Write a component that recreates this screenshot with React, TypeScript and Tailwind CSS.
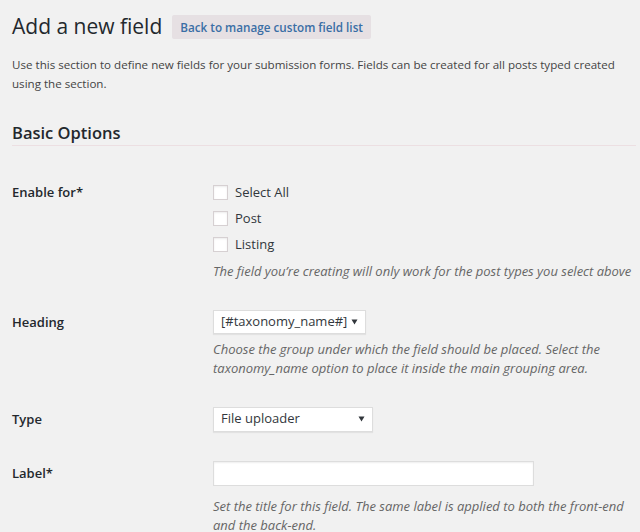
import React from "react";

const Caret = () => (
  <svg width="7" height="6" viewBox="0 0 7 6" className="shrink-0">
    <path d="M0.5 0.5 L6.5 0.5 L3.5 5.5 Z" fill="#32373c" />
  </svg>
);

const Checkbox = ({ label }: { label: string }) => (
  <label className="flex items-center h-[26px]">
    <span className="w-[15px] h-[15px] bg-white border border-[#d6d0d2] shadow-[inset_0_1px_2px_rgba(0,0,0,0.08)] mr-[7px]" />
    <span className="text-[13px] text-[#32373c] leading-[26px]">{label}</span>
  </label>
);

export default function App() {
  return (
    <div
      className="w-[640px] h-[532px] bg-[#f1f1f1] overflow-hidden text-[#23282d]"
      style={{ fontFamily: '"Open Sans", sans-serif' }}
    >
      <div className="pl-3 pr-1">
        <div className="flex items-center pt-[12px]">
          <h1 className="text-[21px] leading-[29px] font-normal text-[#23282d]">Add a new field</h1>
          <span className="ml-[10px] mt-[1px] bg-[#e6e0e3] text-[#3a6ea5] text-[11.7px] font-semibold px-[8px] h-[24px] leading-[24px] rounded-[2px]">
            Back to manage custom field list
          </span>
        </div>
        <p className="mt-[14px] text-[11.6px] leading-[19px] text-[#444]">
          Use this section to define new fields for your submission forms. Fields can be created for all posts typed created using the section.
        </p>
        <h2 className="mt-[29px] text-[16.5px] font-semibold leading-[22px] text-[#23282d] pb-[1px] border-b border-[#ecdfe2]">
          Basic Options
        </h2>

        <div className="grid grid-cols-[201px_1fr] mt-[33px]">
          <div className="text-[13px] font-semibold leading-[26px] text-[#23282d]">Enable for*</div>
          <div>
            <Checkbox label="Select All" />
            <Checkbox label="Post" />
            <Checkbox label="Listing" />
            <p className="mt-[5px] text-[13px] italic text-[#666] leading-[19.5px] whitespace-nowrap">
              The field you’re creating will only work for the post types you select above
            </p>
          </div>

          <div className="text-[13px] font-semibold leading-[24px] text-[#23282d] mt-[28px]">Heading</div>
          <div className="mt-[28px]">
            <div className="w-[153px] h-[24px] bg-white border border-[#ddd] shadow-[0_1px_1px_rgba(0,0,0,0.06)] flex items-center justify-between pl-[7px] pr-[7px] text-[13px] text-[#32373c]">
              <span>[#taxonomy_name#]</span>
              <Caret />
            </div>
            <p className="mt-[6px] text-[13px] italic text-[#666] leading-[19.5px] pr-[24px]">
              Choose the group under which the field should be placed. Select the taxonomy_name option to place it inside the main grouping area.
            </p>
          </div>

          <div className="text-[13px] font-semibold leading-[25px] text-[#23282d] mt-[28px]">Type</div>
          <div className="mt-[28px]">
            <div className="w-[160px] h-[25px] bg-white border border-[#ddd] shadow-[0_1px_1px_rgba(0,0,0,0.06)] flex items-center justify-between pl-[7px] pr-[7px] text-[13px] text-[#32373c]">
              <span>File uploader</span>
              <Caret />
            </div>
          </div>

          <div className="text-[13px] font-semibold leading-[25px] text-[#23282d] mt-[29px]">Label*</div>
          <div className="mt-[29px]">
            <div className="w-[321px] h-[25px] bg-white border border-[#ddd] shadow-[inset_0_1px_2px_rgba(0,0,0,0.07)]" />
            <p className="mt-[11px] text-[13px] italic text-[#666] leading-[19.5px] pr-[4px]">
              Set the title for this field. The same label is applied to both the front-end and the back-end.
            </p>
          </div>
        </div>
      </div>
    </div>
  );
}
